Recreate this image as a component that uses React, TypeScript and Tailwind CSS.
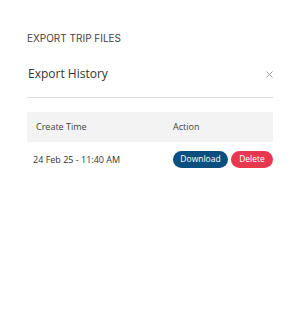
import React from "react";

export default function App() {
  return (
    <div className="w-[300px] h-[312px] bg-white" style={{ fontFamily: "'Open Sans', sans-serif" }}>
      <div className="pl-[27px] pr-[27px] pt-[32px]">
        <div className="text-[10px] leading-[12px] text-[#3f3f3f]" style={{ fontFamily: "Inter, sans-serif" }}>
          EXPORT TRIP FILES
        </div>
        <div className="mt-[21px] flex items-center justify-between border-b border-[#dcdcdc] pb-[14px]">
          <span className="text-[12px] leading-[18px] text-[#333] pl-[1px]">Export History</span>
          <svg width="7" height="7" viewBox="0 0 7 7">
            <path d="M0.5 0.5L6.5 6.5M6.5 0.5L0.5 6.5" stroke="#a0a0a0" strokeWidth="1" />
          </svg>
        </div>
        <div className="mt-[14px]">
          <div className="h-[30px] bg-[#f3f3f3] flex items-center text-[9px] text-[#444]">
            <div className="pl-[9px] w-[146px]">Create Time</div>
            <div>Action</div>
          </div>
          <div className="h-[35px] flex items-center text-[9px] text-[#333]">
            <div className="pl-[6px] w-[146px]">24 Feb 25 - 11:40 AM</div>
            <div className="flex gap-[3px]">
              <button className="h-[17px] w-[55px] rounded-full bg-[#0b4f7f] text-white text-[8.5px] leading-none">
                Download
              </button>
              <button className="h-[17px] w-[42px] rounded-full bg-[#e8384f] text-white text-[8.5px] leading-none">
                Delete
              </button>
            </div>
          </div>
        </div>
      </div>
    </div>
  );
}
